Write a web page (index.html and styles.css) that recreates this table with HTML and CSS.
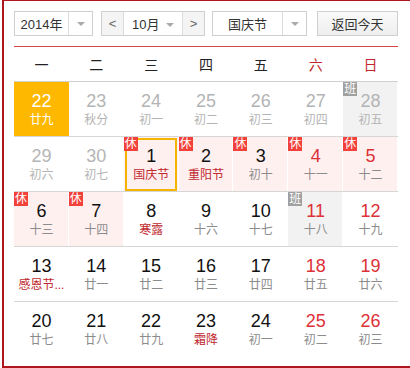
FILE: index.html
```html
<!DOCTYPE html>
<html lang="zh-CN">
<head>
<meta charset="utf-8">
<title>日历</title>
<link rel="stylesheet" href="styles.css">
</head>
<body>
<div class="frame">
  <div class="inner">
    <div class="controls">
      <div class="sel year"><span class="sel-text">2014年</span><span class="sel-arrow"><i class="tri"></i></span></div>
      <div class="month">
        <span class="nav">&lt;</span>
        <span class="mid">10月 <i class="tri"></i></span>
        <span class="nav">&gt;</span>
      </div>
      <div class="sel hol"><span class="sel-text">国庆节</span><span class="sel-arrow"><i class="tri"></i></span></div>
      <div class="btn">返回今天</div>
    </div>
    <div class="week">
      <span>一</span><span>二</span><span>三</span><span>四</span><span>五</span><span class="we">六</span><span class="we">日</span>
    </div>
    <div class="grid">
      <div class="cell today"><b>22</b><em>廿九</em></div>
      <div class="cell other"><b>23</b><em>秋分</em></div>
      <div class="cell other"><b>24</b><em>初一</em></div>
      <div class="cell other"><b>25</b><em>初二</em></div>
      <div class="cell other"><b>26</b><em>初三</em></div>
      <div class="cell other"><b>27</b><em>初四</em></div>
      <div class="cell other work"><span class="badge ban">班</span><b>28</b><em>初五</em></div>

      <div class="cell other"><b>29</b><em>初六</em></div>
      <div class="cell other"><b>30</b><em>初七</em></div>
      <div class="cell rest sel-day"><span class="badge xiu">休</span><b>1</b><em class="fest">国庆节</em></div>
      <div class="cell rest"><span class="badge xiu">休</span><b>2</b><em class="fest">重阳节</em></div>
      <div class="cell rest"><span class="badge xiu">休</span><b>3</b><em>初十</em></div>
      <div class="cell rest wkd"><span class="badge xiu">休</span><b>4</b><em>十一</em></div>
      <div class="cell rest wkd"><span class="badge xiu">休</span><b>5</b><em>十二</em></div>

      <div class="cell rest"><span class="badge xiu">休</span><b>6</b><em>十三</em></div>
      <div class="cell rest"><span class="badge xiu">休</span><b>7</b><em>十四</em></div>
      <div class="cell"><b>8</b><em class="fest">寒露</em></div>
      <div class="cell"><b>9</b><em>十六</em></div>
      <div class="cell"><b>10</b><em>十七</em></div>
      <div class="cell work wkd"><span class="badge ban">班</span><b>11</b><em>十八</em></div>
      <div class="cell wkd"><b>12</b><em>十九</em></div>

      <div class="cell"><b>13</b><em class="fest">感恩节...</em></div>
      <div class="cell"><b>14</b><em>廿一</em></div>
      <div class="cell"><b>15</b><em>廿二</em></div>
      <div class="cell"><b>16</b><em>廿三</em></div>
      <div class="cell"><b>17</b><em>廿四</em></div>
      <div class="cell wkd"><b>18</b><em>廿五</em></div>
      <div class="cell wkd"><b>19</b><em>廿六</em></div>

      <div class="cell last"><b>20</b><em>廿七</em></div>
      <div class="cell last"><b>21</b><em>廿八</em></div>
      <div class="cell last"><b>22</b><em>廿九</em></div>
      <div class="cell last"><b>23</b><em class="fest">霜降</em></div>
      <div class="cell last"><b>24</b><em>初一</em></div>
      <div class="cell last wkd"><b>25</b><em>初二</em></div>
      <div class="cell last wkd"><b>26</b><em>初三</em></div>
    </div>
  </div>
</div>
</body>
</html>
```

FILE: styles.css
```css
html, body {
  margin: 0;
  padding: 0;
  overflow: hidden;
  background: #fff;
}
body {
  font-family: "Liberation Sans", Arial, "Noto Sans CJK SC", sans-serif;
  color: #222;
}
.frame {
  margin: -1px 0 0 2px;
  width: 408px;
  height: 369px;
  box-sizing: border-box;
  border: 2px solid #b0171c;
  border-right: 0;
}
.inner {
  width: 384px;
  padding: 10px 0 0 10px;
}
.controls {
  display: flex;
  height: 25px;
  font-size: 13px;
  color: #333;
}
.sel, .month, .btn {
  box-sizing: border-box;
  height: 25px;
  border: 1px solid #cfcfcf;
  display: flex;
  align-items: center;
}
.year { width: 79px; }
.hol { width: 95px; margin-left: 7px; }
.sel-text {
  flex: 1;
  text-align: center;
}
.sel-arrow {
  width: 23px;
  height: 100%;
  border-left: 1px solid #dcdcdc;
  display: flex;
  align-items: center;
  justify-content: center;
}
.tri {
  display: inline-block;
  width: 0;
  height: 0;
  border-left: 4px solid transparent;
  border-right: 4px solid transparent;
  border-top: 4px solid #aaa;
  vertical-align: middle;
}
.month {
  width: 104px;
  margin-left: 8px;
}
.nav {
  width: 21px;
  height: 100%;
  display: flex;
  align-items: center;
  justify-content: center;
  background: #f4f4f4;
  color: #666;
  font-size: 13px;
}
.month .nav:first-child { border-right: 1px solid #dcdcdc; }
.month .nav:last-child { border-left: 1px solid #dcdcdc; }
.mid {
  flex: 1;
  text-align: center;
}
.mid .tri { margin-left: 3px; margin-top: -2px; }
.btn {
  width: 81px;
  margin-left: 10px;
  justify-content: center;
  background: linear-gradient(#fafafa, #eeeeee);
}
.week {
  margin-top: 10px;
  border-top: 1px solid #d44a4a;
  border-bottom: 1px solid #d0d0d0;
  height: 34px;
  display: grid;
  grid-template-columns: repeat(7, 1fr);
  align-items: center;
  text-align: center;
  font-size: 14px;
  color: #222;
}
.week .we { color: #c0282e; }
.grid {
  display: grid;
  grid-template-columns: repeat(7, 1fr);
}
.cell {
  position: relative;
  box-sizing: border-box;
  height: 55px;
  border-bottom: 1px solid #d6d6d6;
  text-align: center;
  padding-top: 8px;
}
.cell.last { border-bottom: none; }
.cell b {
  display: block;
  font-weight: normal;
  font-size: 18px;
  line-height: 22px;
  color: #111;
}
.cell em {
  display: block;
  font-style: normal;
  font-size: 12px;
  line-height: 16px;
  color: #8c8c8c;
  white-space: nowrap;
}
.cell.other b, .cell.other em { color: #b4b4b4; }
.cell.wkd b { color: #dd3138; }
.cell em.fest { color: #c0282e; }
.cell.today { background: #ffb800; }
.cell.today b, .cell.today em { color: #fff; }
.cell.rest {
  background: #fff0f0;
  box-shadow: inset -1px 0 0 #fff;
}
.cell.work {
  background: #f2f2f2;
  box-shadow: inset -1px 0 0 #fff;
}
.cell.sel-day::after {
  content: "";
  position: absolute;
  left: 1px;
  top: 1px;
  right: 2px;
  bottom: 0;
  border: 2px solid #f4b400;
}
.badge {
  position: absolute;
  left: 0;
  top: 0;
  width: 14px;
  height: 14px;
  font-size: 12px;
  line-height: 14px;
  color: #fff;
  text-align: center;
  z-index: 1;
}
.badge.xiu { background: #f2403a; }
.badge.ban { background: #a0a0a0; }
```
